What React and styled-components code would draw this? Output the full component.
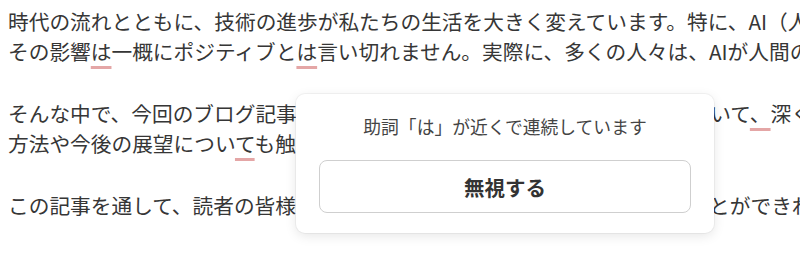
import styled, {createGlobalStyle} from "styled-components";

const Global = createGlobalStyle`
	html, body {
		margin: 0;
		padding: 0;
		background: #fff;
		overflow: hidden;
	}
	body {
		font-family: "Noto Sans CJK JP", "Noto Sans", sans-serif;
	}
`;
const Page = styled.div`
	position: relative;
	width: 800px;
	height: 266px;
	overflow: hidden;
`;
const Editor = styled.div`
	padding: 6px 8px;
	color: #363636;
	font-size: 20.7px;
	line-height: 30px;
`;
const Para = styled.p`
	margin: 0 0 32px;
	white-space: nowrap;
`;
const Line = styled.span`
	display: block;
`;
const Mark = styled.span`
	text-decoration: underline;
	text-decoration-color: #e4a6a6;
	text-decoration-thickness: 3px;
	text-underline-offset: 6px;
`;
const Popover = styled.div`
	position: absolute;
	left: 296px;
	top: 94px;
	width: 418px;
	box-sizing: border-box;
	padding: 20px 23px 20px;
	background: #fff;
	border-radius: 9px;
	box-shadow: 0 0 0 1px rgba(0, 0, 0, 0.04), 0 3px 12px rgba(0, 0, 0, 0.1);
	display: flex;
	flex-direction: column;
	gap: 22px;
`;
const Message = styled.div`
	text-align: center;
	font-size: 17.8px;
	line-height: 24px;
	color: #444;
`;
const IgnoreButton = styled.button`
	height: 53px;
	border: 1px solid #cfcfcf;
	border-radius: 8px;
	background: #fff;
	font-family: inherit;
	font-size: 20.5px;
	font-weight: 700;
	color: #333;
	cursor: pointer;
`;

export default function App(){
	return(
		<Page>
			<Global/>
			<Editor>
				<Para>
					<Line>時代の流れとともに、技術の進歩が私たちの生活を大きく変えています。特に、AI（人工知能）の進化は目覚ましいものがあります。</Line>
					<Line>その影響<Mark>は</Mark>一概にポジティブと<Mark>は</Mark>言い切れません。実際に、多くの人々は、AIが人間の仕事を奪うのではないかと懸念しています。</Line>
				</Para>
				<Para>
					<Line>そんな中で、今回のブログ記事では、人工知能がもたらす社会への影響について<Mark>、</Mark>深く掘り下げていきます。</Line>
					<Line>方法や今後の展望につい<Mark>て</Mark>も触れていきます。</Line>
				</Para>
				<Para>
					<Line>この記事を通して、読者の皆様が人工知能についての正しい理解を深めることができれば幸いです。</Line>
				</Para>
			</Editor>
			<Popover>
				<Message>助詞「は」が近くで連続しています</Message>
				<IgnoreButton>無視する</IgnoreButton>
			</Popover>
		</Page>
	);
};
